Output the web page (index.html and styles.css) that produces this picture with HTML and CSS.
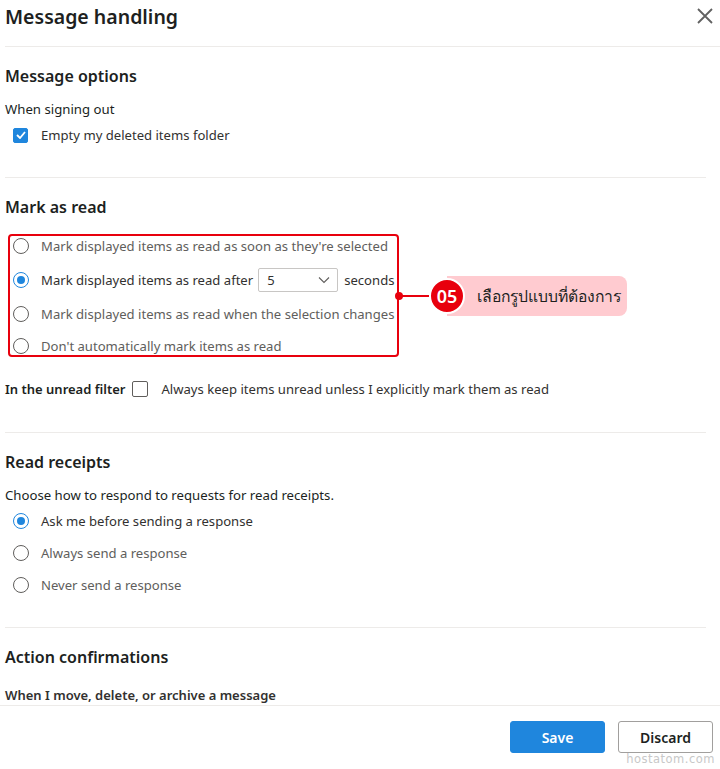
FILE: index.html
```html
<!DOCTYPE html>
<html>
<head>
<meta charset="utf-8">
<link rel="stylesheet" href="styles.css">
</head>
<body>
<div class="dialog">
  <div class="header">
    <h1 class="title">Message handling</h1>
    <svg class="close" width="16" height="16" viewBox="0 0 16 16"><path d="M1 1 L15 15 M15 1 L1 15" stroke="#616161" stroke-width="1.8" fill="none"/></svg>
  </div>
  <div class="content">
    <section class="section">
      <h2 class="sec-title">Message options</h2>
      <div class="label">When signing out</div>
      <div class="row check-row">
        <span class="checkbox checked"><svg width="10" height="8" viewBox="0 0 10 8"><path d="M1 4 L4 7 L9 1" stroke="#fff" stroke-width="1.8" fill="none"/></svg></span>
        <span class="opt dark">Empty my deleted items folder</span>
      </div>
    </section>
    <section class="section mark">
      <h2 class="sec-title">Mark as read</h2>
      <div class="radio-group highlight">
        <div class="row radio-row"><span class="radio"></span><span class="opt">Mark displayed items as read as soon as they're selected</span></div>
        <div class="row radio-row"><span class="radio on"></span><span class="opt dark">Mark displayed items as read after</span>
          <span class="select"><span>5</span><svg width="12" height="8" viewBox="0 0 12 8"><path d="M1 1.5 L6 6.5 L11 1.5" stroke="#605e5c" stroke-width="1.1" fill="none"/></svg></span>
          <span class="opt dark">seconds</span></div>
        <div class="row radio-row"><span class="radio"></span><span class="opt">Mark displayed items as read when the selection changes</span></div>
        <div class="row radio-row last-row"><span class="radio"></span><span class="opt">Don't automatically mark items as read</span></div>
        <div class="callout">
          <span class="dot"></span><span class="line"></span>
          <span class="badge">05</span>
          <span class="pill">เลือกรูปแบบที่ต้องการ</span>
        </div>
      </div>
      <div class="row unread-row">
        <span class="bold-label">In the unread filter</span>
        <span class="checkbox"></span>
        <span class="opt dark">Always keep items unread unless I explicitly mark them as read</span>
      </div>
    </section>
    <section class="section">
      <h2 class="sec-title">Read receipts</h2>
      <div class="label">Choose how to respond to requests for read receipts.</div>
      <div class="receipts">
        <div class="row radio-row"><span class="radio on"></span><span class="opt dark">Ask me before sending a response</span></div>
        <div class="row radio-row"><span class="radio"></span><span class="opt">Always send a response</span></div>
        <div class="row radio-row"><span class="radio"></span><span class="opt">Never send a response</span></div>
      </div>
    </section>
    <section class="section last">
      <h2 class="sec-title">Action confirmations</h2>
      <div class="semi-label">When I move, delete, or archive a message</div>
    </section>
  </div>
  <div class="footer">
    <button class="btn primary">Save</button>
    <button class="btn">Discard</button>
  </div>
  <div class="watermark">hostatom.com</div>
</div>
</body>
</html>
```
FILE: styles.css
```css
* { box-sizing: border-box; }
html, body { margin: 0; padding: 0; background: #fff; }
body {
  font-family: "Noto Sans", "Open Sans", sans-serif;
  color: #201f1e;
  width: 720px;
  height: 769px;
  overflow: hidden;
}
.dialog { position: relative; height: 769px; }
.header {
  display: flex;
  justify-content: space-between;
  align-items: center;
  height: 47px;
  margin-left: 5px;
  border-bottom: 1px solid #edebe9;
  padding-right: 7px;
  padding-bottom: 12px;
}
.title { margin: 0; font-size: 19.5px; font-weight: 600; line-height: 28px; }
.close { margin-top: -3px; }
.content { padding-left: 5px; padding-right: 14px; }
.section { border-bottom: 1px solid #edebe9; padding: 18px 0 32px; }
.section.mark { padding-bottom: 33px; }
.section.last { border-bottom: none; padding-bottom: 0; }
.sec-title { margin: 0 0 12px; font-size: 16px; font-weight: 600; line-height: 22px; }
.label { font-size: 13.2px; line-height: 20px; }
.row { display: flex; align-items: center; height: 20px; }
.check-row { margin-top: 6px; padding-left: 8px; }
.checkbox {
  width: 16px; height: 16px; border: 1px solid #605e5c; border-radius: 2px;
  display: inline-flex; align-items: center; justify-content: center; flex: none;
}
.checkbox.checked { background: #1f86dd; border-color: #1f86dd; width: 15px; height: 15px; }
.check-row .checkbox { margin-right: 13px; }
.opt { font-size: 13.1px; color: #605e5c; line-height: 20px; white-space: nowrap; }
.opt.dark { color: #323130; }
.radio-group { position: relative; }
.highlight {
  border: 2px solid #e8000d; border-radius: 4px;
  width: 391px; margin-left: 3px; margin-top: 16px; padding: 0 0 0 1px;
  height: 123px;
}
.highlight .radio-row + .radio-row { margin-top: 14px; }
.highlight .radio-row.last-row { margin-top: 12px; }
.radio {
  width: 16px; height: 16px; border: 1px solid #605e5c; border-radius: 50%;
  margin-right: 12px; margin-left: 2px; flex: none; position: relative;
}
.radio.on { border-color: #1f86dd; }
.radio.on::after {
  content: ""; position: absolute; left: 3px; top: 3px; width: 8px; height: 8px;
  border-radius: 50%; background: #1f86dd;
}
.select {
  display: inline-flex; align-items: center; justify-content: space-between;
  width: 80px; height: 24px; flex: none; border: 1px solid #c8c6c4; border-radius: 2px;
  margin: 0 6px 0 5px; padding: 0 7px 0 8px; font-size: 13px; color: #323130;
}
.callout { position: absolute; left: 385px; top: 40px; display: flex; align-items: center; height: 40px; }
.dot { width: 8px; height: 8px; border-radius: 50%; background: #e8000d; flex: none; }
.line { width: 27px; height: 2px; background: #e8000d; margin-left: -1px; flex: none; }
.badge {
  width: 36px; height: 36px; border-radius: 50%; background: #e8000d; color: #fff;
  border: 2px solid #fff;
  display: flex; align-items: center; justify-content: center;
  font-size: 18px; font-weight: 600; position: relative; z-index: 1; flex: none;
}
.pill {
  background: #ffcbd0; height: 40px; border-radius: 0 8px 8px 0;
  margin-left: -18px; padding: 0 6px 0 30px; display: flex; align-items: center;
  font-size: 15.7px; color: #201f1e; white-space: nowrap;
}
.unread-row { margin-top: 22px; }
.bold-label { font-size: 13px; font-weight: 600; margin-right: 7px; }
.unread-row .checkbox { margin-right: 13px; }
.receipts { margin-top: 6px; margin-left: 6px; }
.receipts .radio-row + .radio-row { margin-top: 12px; }
.receipts .radio { margin-left: 2px; }
.semi-label { font-size: 13px; font-weight: 600; color: #323130; margin-top: 17px; line-height: 20px; }
.footer {
  position: absolute; left: 0; right: 0; top: 705px; height: 64px;
  border-top: 1px solid #edebe9; background: #fff;
  display: flex; justify-content: flex-end; padding: 15px 7px 0 0; gap: 13px;
}
.btn {
  width: 95px; height: 32px; border: 1px solid #a19f9d; background: #fff; border-radius: 3px;
  font-family: inherit; font-size: 14px; font-weight: 600; color: #201f1e;
}
.btn.primary { background: #1f86dd; border-color: #1f86dd; color: #fff; }
.watermark {
  position: absolute; right: 5px; top: 752px; font-size: 11.5px; color: #c8c8c8;
  letter-spacing: 0.5px; font-family: "DejaVu Sans", sans-serif;
}
```
